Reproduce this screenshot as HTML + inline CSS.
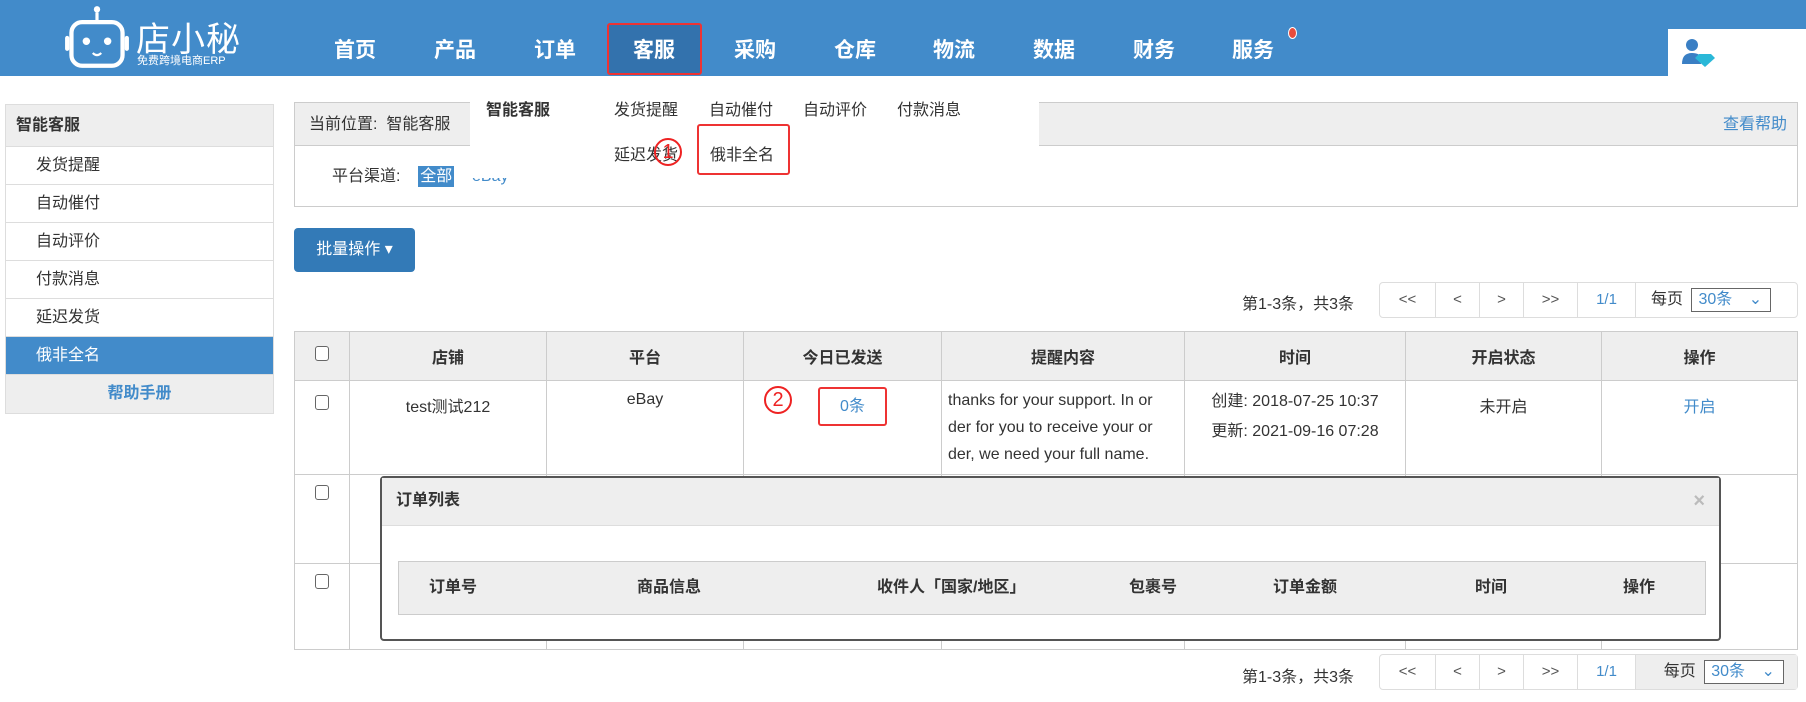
<!DOCTYPE html>
<html><head><meta charset="utf-8"><style>
*{margin:0;padding:0;box-sizing:border-box}
body{width:1806px;height:702px;position:relative;overflow:hidden;background:#fff;font-family:"Liberation Sans","Noto Sans CJK SC",sans-serif;font-size:16px;color:#333}
.a{position:absolute}
.hdr{left:0;top:0;width:1806px;height:76px;background:#428bca}
.nav{top:34px;color:#fff;font-weight:bold;font-size:21px;width:100px;text-align:center}
.side{left:5px;top:104px;width:269px;border:1px solid #ddd}
.side div{height:38px;line-height:38px;padding-left:30px;border-bottom:1px solid #ddd;font-size:16px}
.blue{color:#428bca}
table{border-collapse:collapse;table-layout:fixed}
.t td,.t th{border:1px solid #ccc;font-size:16px;text-align:center;vertical-align:top;overflow:hidden}
.t th{background:#eee;font-weight:bold;height:49px;vertical-align:middle}
.cb{display:inline-block;width:14px;height:15px;border:1px solid #666;border-radius:3px;background:#fff}
.pg{height:36px;border:1px solid #ddd;border-radius:4px;display:flex;font-size:15px}
.pg span{border-right:1px solid #ddd;line-height:34px;text-align:center;color:#555}
</style></head><body>
<div class="a hdr"></div>
<svg class="a" style="left:64px;top:4px" width="66" height="66" viewBox="0 0 60 62"><circle cx="30" cy="5" r="3" fill="#fff"/><line x1="30" y1="8" x2="30" y2="17" stroke="#fff" stroke-width="3"/><rect x="6" y="17" width="48" height="41" rx="10" fill="none" stroke="#fff" stroke-width="4"/><rect x="0" y="30" width="4" height="14" rx="2" fill="#fff"/><rect x="56" y="30" width="4" height="14" rx="2" fill="#fff"/><circle cx="20" cy="35" r="3.5" fill="#fff"/><circle cx="40" cy="35" r="3.5" fill="#fff"/><path d="M26 46 Q30 50 34 46" stroke="#fff" stroke-width="2" fill="none"/></svg>
<div class="a" style="left:136px;top:12px;color:#fff;font-size:34px;letter-spacing:1px">店小秘</div>
<div class="a" style="left:137px;top:52px;color:#fff;font-size:11px">免费跨境电商ERP</div>
<div class="a" style="left:607px;top:23px;width:95px;height:52px;background:#3372ad;border:2px solid #e33;border-radius:3px"></div>
<div class="a nav" style="left:305px">首页</div><div class="a nav" style="left:405px">产品</div><div class="a nav" style="left:505px">订单</div><div class="a nav" style="left:604px">客服</div><div class="a nav" style="left:705px">采购</div><div class="a nav" style="left:805px">仓库</div><div class="a nav" style="left:904px">物流</div><div class="a nav" style="left:1004px">数据</div><div class="a nav" style="left:1104px">财务</div><div class="a nav" style="left:1203px">服务</div>
<div class="a" style="left:1288px;top:27px;width:9px;height:12px;border-radius:50%;background:#e84c3d;border:1px solid #fff"></div>
<div class="a" style="left:1668px;top:29px;width:138px;height:47px;background:#fff"></div>
<svg class="a" style="left:1682px;top:38px" width="34" height="30" viewBox="0 0 34 30"><circle cx="10" cy="7" r="6" fill="#3a7fc4"/><path d="M0 26 Q0 15 10 15 Q18 15 19 20 L19 26Z" fill="#3a7fc4"/><path d="M17 16 L29 16 L33 20 L23 29 L13 20Z" fill="#2ab8d8"/></svg>

<div class="a side">
<div style="background:#eee;font-weight:bold;padding-left:10px;height:42px;line-height:42px">智能客服</div>
<div>发货提醒</div><div>自动催付</div><div>自动评价</div><div>付款消息</div><div>延迟发货</div>
<div style="background:#428bca;color:#fff">俄非全名</div>
<div style="background:#eee;color:#428bca;font-weight:bold;text-align:center;padding:0;border:none">帮助手册</div>
</div>

<div class="a" style="left:294px;top:102px;width:1504px;height:105px;border:1px solid #ccc">
<div style="height:43px;background:#eee;border-bottom:1px solid #ccc;line-height:43px;padding-left:14px;font-size:16px">当前位置:&nbsp; 智能客服<span class="blue" style="float:right;margin-right:10px">查看帮助</span></div>
<div style="padding:16px 0 0 37px;font-size:16px">平台渠道:&nbsp;&nbsp;&nbsp; <span style="background:#428bca;color:#fff;padding:2px 2px">全部</span> &nbsp;&nbsp;&nbsp;<span class="blue">eBay</span></div>
</div>
<div class="a" style="left:470px;top:76px;width:569px;height:102px;background:#fff"></div>
<div class="a" style="left:486px;top:96px;font-weight:bold;font-size:16px">智能客服</div>
<div class="a" style="left:614px;top:96px;font-size:16px">发货提醒</div>
<div class="a" style="left:709px;top:96px;font-size:16px">自动催付</div>
<div class="a" style="left:803px;top:96px;font-size:16px">自动评价</div>
<div class="a" style="left:897px;top:96px;font-size:16px">付款消息</div>
<div class="a" style="left:614px;top:141px;font-size:16px">延迟发货</div>
<div class="a" style="left:697px;top:124px;width:93px;height:51px;border:2px solid #e33;border-radius:3px"></div>
<div class="a" style="left:710px;top:141px;font-size:16px">俄非全名</div>
<div class="a" style="left:654px;top:138px;width:28px;height:28px;border:2px solid #e22;border-radius:50%;color:#e22;font-size:20px;line-height:24px;text-align:center">1</div>

<div class="a" style="left:294px;top:228px;width:121px;height:44px;background:#337ab7;border-radius:4px;color:#fff;line-height:44px;text-align:center;font-size:16px">批量操作 ▾</div>

<div class="a" style="left:1242px;top:290px;font-size:16px">第1-3条，共3条</div>
<div class="a pg" style="left:1379px;top:282px;width:419px"><span style="width:56px">&lt;&lt;</span><span style="width:44px">&lt;</span><span style="width:44px">&gt;</span><span style="width:54px">&gt;&gt;</span><span style="width:58px;color:#428bca">1/1</span><span style="border:none;padding-left:15px;color:#333;font-size:16px">每页 <b style="display:inline-block;font-weight:normal;border:1px solid #666;width:80px;height:24px;line-height:22px;color:#428bca;margin-left:4px;text-align:left;padding-left:6px">30条 <i style="font-style:normal;margin-left:12px">⌄</i></b></span></div>

<table class="a t" style="left:294px;top:331px;width:1504px">
<colgroup><col style="width:55px"><col style="width:197px"><col style="width:197px"><col style="width:198px"><col style="width:243px"><col style="width:221px"><col style="width:196px"><col></colgroup>
<tr><th><span class="cb"></span></th><th>店铺</th><th>平台</th><th>今日已发送</th><th>提醒内容</th><th>时间</th><th>开启状态</th><th>操作</th></tr>
<tr style="height:90px"><td style="padding-top:14px"><span class="cb"></span></td><td style="padding-top:12px">test测试212</td><td style="padding-top:10px">eBay</td><td style="padding-top:6px;position:relative"><span style="position:absolute;left:20px;top:5px;width:28px;height:28px;border:2px solid #e22;border-radius:50%;color:#e22;font-size:20px;line-height:24px;text-align:center">2</span><span style="display:inline-block;margin-left:20px;width:69px;height:39px;border:2px solid #e33;border-radius:3px;line-height:35px;color:#428bca">0条</span></td><td style="text-align:left;padding:6px 6px;line-height:27px;font-size:16px;white-space:nowrap">thanks for your support. In or<br>der for you to receive your or<br>der, we need your full name.</td><td style="padding-top:6px;line-height:30px">创建: 2018-07-25 10:37<br>更新: 2021-09-16 07:28</td><td style="padding-top:12px">未开启</td><td style="padding-top:12px;color:#428bca">开启</td></tr>
<tr style="height:89px"><td style="padding-top:10px"><span class="cb"></span></td><td></td><td></td><td></td><td></td><td></td><td></td><td></td></tr>
<tr style="height:86px"><td style="padding-top:10px"><span class="cb"></span></td><td></td><td></td><td></td><td></td><td></td><td></td><td></td></tr>
</table>

<div class="a" style="left:380px;top:476px;width:1341px;height:165px;border:2px solid #555;border-radius:4px;background:#fff">
<div style="height:48px;background:#eee;border-bottom:1px solid #ddd;line-height:46px;padding-left:14px;font-weight:bold;font-size:16px">订单列表<span style="float:right;margin-right:14px;color:#bbb;font-size:20px">×</span></div>
<div style="position:absolute;left:16px;top:83px;width:1308px;height:54px;background:#eee;border:1px solid #ccc;font-weight:bold;font-size:16px;line-height:52px">
<span class="a" style="left:30px">订单号</span><span class="a" style="left:238px">商品信息</span><span class="a" style="left:478px">收件人「国家/地区」</span><span class="a" style="left:730px">包裹号</span><span class="a" style="left:874px">订单金额</span><span class="a" style="left:1076px">时间</span><span class="a" style="left:1224px">操作</span></div>
</div>

<div class="a" style="left:1242px;top:663px;font-size:16px">第1-3条，共3条</div>
<div class="a pg" style="left:1379px;top:654px;width:419px"><span style="width:56px">&lt;&lt;</span><span style="width:44px">&lt;</span><span style="width:44px">&gt;</span><span style="width:54px">&gt;&gt;</span><span style="width:58px;color:#428bca">1/1</span><span style="border:none;padding-left:15px;color:#333;font-size:16px;background:#eee;flex:1">每页 <b style="display:inline-block;font-weight:normal;border:1px solid #666;width:80px;height:24px;line-height:22px;color:#428bca;margin-left:4px;text-align:left;padding-left:6px;background:#fff">30条 <i style="font-style:normal;margin-left:12px">⌄</i></b></span></div>
</body></html>
